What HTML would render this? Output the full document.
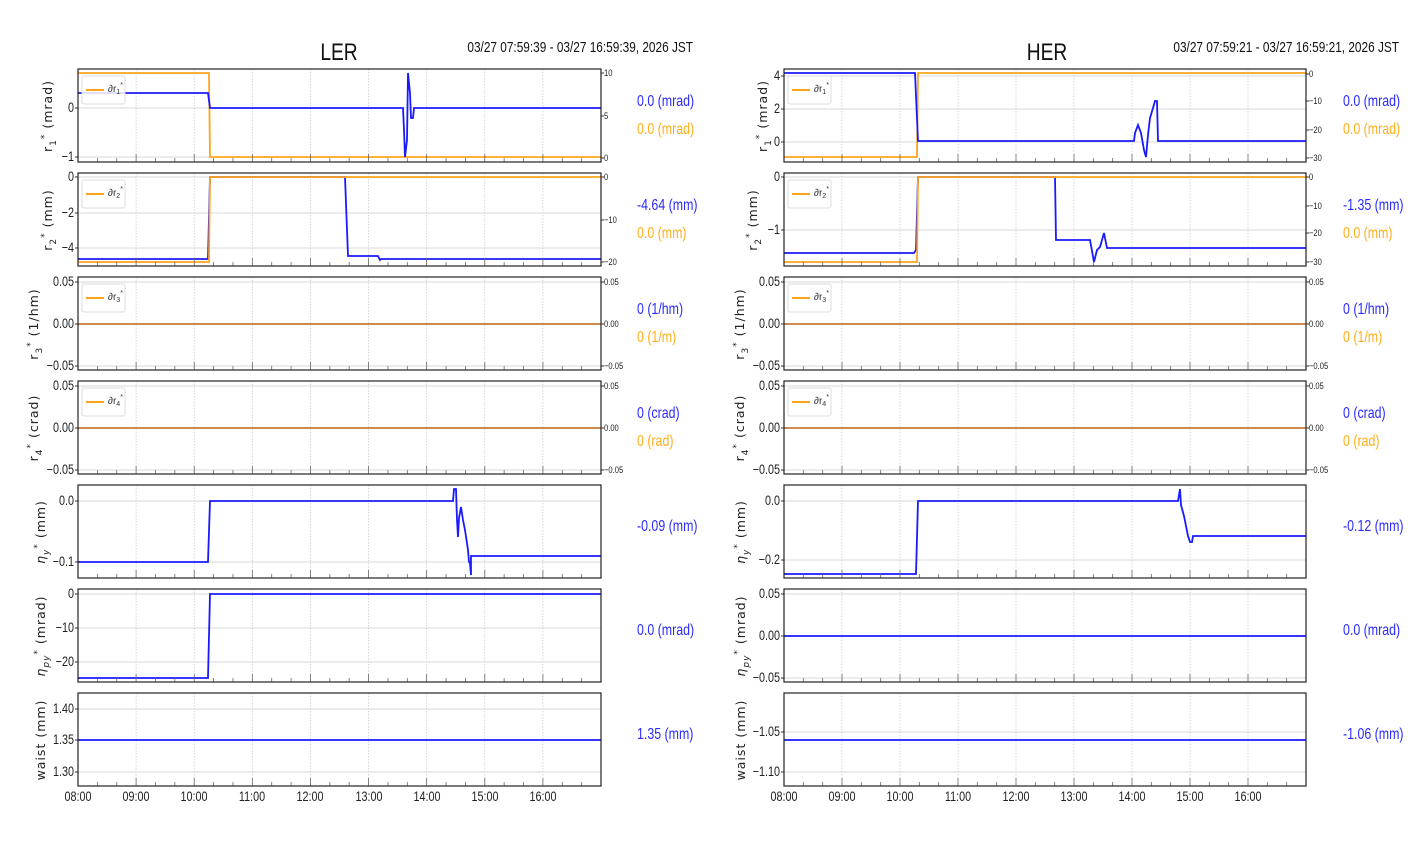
<!DOCTYPE html>
<html><head><meta charset="utf-8"><style>
body{margin:0;background:#fff}
svg{display:block}
.n{font-family:"Liberation Sans Narrow","Liberation Sans",sans-serif}
.n text,text.n{transform-box:fill-box}
.tl{font-size:13.5px;fill:#222;text-anchor:end}
.tl text{transform:scaleX(.8);transform-origin:right center}
.tr{font-size:9.5px;fill:#222}
.tr text{transform:scaleX(.8);transform-origin:left center}
.xl{font-size:13.5px;fill:#222;text-anchor:middle}
.xl text{transform:scaleX(.8);transform-origin:center}
.yl{font-family:"DejaVu Sans","Liberation Sans",sans-serif;font-size:12.5px;fill:#222;text-anchor:middle;letter-spacing:1px}
.vb{font-size:15.5px;fill:#2a2aff}
.vo{font-size:15.5px;fill:#ffae1a}
.vb,.vo{transform:scaleX(.8);transform-origin:left center}
.hd{transform:scaleX(.8);transform-origin:right center}
.tt{transform:scaleX(.8);transform-origin:center}
.lg{font-size:10px;fill:#333}
.b{fill:none;stroke:#1a1aff;stroke-width:1.8}
.o{fill:none;stroke:#ffa51a;stroke-width:1.8}
</style></head><body>
<svg id="s" width="1412" height="864" xmlns="http://www.w3.org/2000/svg">
<g id="grid"></g>
<!-- LEFT DATA -->
<polyline class="o" points="78,73 209,73 210,157 601,157"/>
<polyline class="b" points="78,93 208,93 210,108 403,108 404,130 405,157 407,140 408,73 410,93 411,118 413,118 414,108 601,108"/>
<polyline class="b" points="78,259 208,259 210,177 345,177 348,256 378,256 380,260 381,259 601,259"/>
<polyline class="o" points="78,262 209,262 210,177 601,177"/>
<line x1="78" y1="324" x2="601" y2="324" stroke="#c87a3a" stroke-width="1.8"/>
<line x1="78" y1="428" x2="601" y2="428" stroke="#c87a3a" stroke-width="1.8"/>
<polyline class="b" points="78,562 208,562 210,501 453,501 454,489 456,489 457,520 458,537 459,518 461,507 463,520 465,530 468,550 469,562 470,563 471,575 471,556 601,556"/>
<polyline class="b" points="78,678 208,678 210,594 601,594"/>
<line class="b" x1="78" y1="740" x2="601" y2="740"/>
<!-- RIGHT DATA -->
<polyline class="o" points="784,157 917,157 918,73 1306,73"/>
<polyline class="b" points="784,73 915,73 918,141 1134,141 1135,133 1138,125 1141,133 1144,150 1146,157 1148,135 1150,118 1153,108 1155,101 1157,101 1158,141 1306,141"/>
<polyline class="b" points="784,253 914,253 916,250 918,177 1055,177 1056,240 1090,240 1094,262 1097,250 1100,247 1104,233 1107,248 1306,248"/>
<polyline class="o" points="784,262 917,262 918,177 1306,177"/>
<line x1="784" y1="324" x2="1306" y2="324" stroke="#c87a3a" stroke-width="1.8"/>
<line x1="784" y1="428" x2="1306" y2="428" stroke="#c87a3a" stroke-width="1.8"/>
<polyline class="b" points="784,574 916,574 918,501 1178,501 1180,489 1181,505 1184,516 1186,526 1188,536 1190,542 1192,542 1193,536 1306,536"/>
<line class="b" x1="784" y1="636" x2="1306" y2="636"/>
<line class="b" x1="784" y1="740" x2="1306" y2="740"/>
<g id="frames"></g>
<!-- titles -->
<text class="n tt" x="339" y="60" font-size="24" text-anchor="middle" fill="#111">LER</text>
<text class="n hd" x="693" y="52" font-size="14.8" text-anchor="end" fill="#111">03/27 07:59:39 - 03/27 16:59:39, 2026 JST</text>
<text class="n tt" x="1047" y="60" font-size="24" text-anchor="middle" fill="#111">HER</text>
<text class="n hd" x="1399" y="52" font-size="14.8" text-anchor="end" fill="#111">03/27 07:59:21 - 03/27 16:59:21, 2026 JST</text>
<!-- left ticks -->
<g class="n tl">
<text x="74" y="112">0</text><text x="74" y="161">−1</text>
<text x="74" y="181">0</text><text x="74" y="217">−2</text><text x="74" y="252">−4</text>
<text x="74" y="286">0.05</text><text x="74" y="328">0.00</text><text x="74" y="370">−0.05</text>
<text x="74" y="390">0.05</text><text x="74" y="432">0.00</text><text x="74" y="474">−0.05</text>
<text x="74" y="505">0.0</text><text x="74" y="566">−0.1</text>
<text x="74" y="598">0</text><text x="74" y="632">−10</text><text x="74" y="666">−20</text>
<text x="74" y="713">1.40</text><text x="74" y="744">1.35</text><text x="74" y="776">1.30</text>
<text x="780" y="80">4</text><text x="780" y="113">2</text><text x="780" y="146">0</text>
<text x="780" y="181">0</text><text x="780" y="234">−1</text>
<text x="780" y="286">0.05</text><text x="780" y="328">0.00</text><text x="780" y="370">−0.05</text>
<text x="780" y="390">0.05</text><text x="780" y="432">0.00</text><text x="780" y="474">−0.05</text>
<text x="780" y="505">0.0</text><text x="780" y="564">−0.2</text>
<text x="780" y="598">0.05</text><text x="780" y="640">0.00</text><text x="780" y="682">−0.05</text>
<text x="780" y="736">−1.05</text><text x="780" y="776">−1.10</text>
</g>
<g class="n tr">
<text x="604" y="76">10</text><text x="604" y="119">5</text><text x="604" y="161">0</text>
<text x="604" y="180">0</text><text x="604" y="223">−10</text><text x="604" y="265">−20</text>
<text x="604" y="285">0.05</text><text x="604" y="327">0.00</text><text x="604" y="369">−0.05</text>
<text x="604" y="389">0.05</text><text x="604" y="431">0.00</text><text x="604" y="473">−0.05</text>
<text x="1309" y="77">0</text><text x="1309" y="104">−10</text><text x="1309" y="133">−20</text><text x="1309" y="161">−30</text>
<text x="1309" y="180">0</text><text x="1309" y="209">−10</text><text x="1309" y="236">−20</text><text x="1309" y="265">−30</text>
<text x="1309" y="285">0.05</text><text x="1309" y="327">0.00</text><text x="1309" y="369">−0.05</text>
<text x="1309" y="389">0.05</text><text x="1309" y="431">0.00</text><text x="1309" y="473">−0.05</text>
</g>
<g class="n xl">
<text x="78" y="801">08:00</text><text x="136" y="801">09:00</text><text x="194" y="801">10:00</text><text x="252" y="801">11:00</text><text x="310" y="801">12:00</text><text x="369" y="801">13:00</text><text x="427" y="801">14:00</text><text x="485" y="801">15:00</text><text x="543" y="801">16:00</text>
<text x="784" y="801">08:00</text><text x="842" y="801">09:00</text><text x="900" y="801">10:00</text><text x="958" y="801">11:00</text><text x="1016" y="801">12:00</text><text x="1074" y="801">13:00</text><text x="1132" y="801">14:00</text><text x="1190" y="801">15:00</text><text x="1248" y="801">16:00</text>
</g>
<!-- y labels -->
<g class="yl">
<text transform="translate(52,116) rotate(-90)">r<tspan font-size="9" dy="4">1</tspan><tspan font-size="9" dy="-9">*</tspan><tspan dy="5"> (mrad)</tspan></text>
<text transform="translate(52,220) rotate(-90)">r<tspan font-size="9" dy="4">2</tspan><tspan font-size="9" dy="-9">*</tspan><tspan dy="5"> (mm)</tspan></text>
<text transform="translate(38,324) rotate(-90)">r<tspan font-size="9" dy="4">3</tspan><tspan font-size="9" dy="-9">*</tspan><tspan dy="5"> (1/hm)</tspan></text>
<text transform="translate(38,428) rotate(-90)">r<tspan font-size="9" dy="4">4</tspan><tspan font-size="9" dy="-9">*</tspan><tspan dy="5"> (crad)</tspan></text>
<text transform="translate(45,532) rotate(-90)"><tspan font-style="italic">η</tspan><tspan font-size="9" dy="4" font-style="italic">y</tspan><tspan font-size="9" dy="-9">*</tspan><tspan dy="5"> (mm)</tspan></text>
<text transform="translate(45,636) rotate(-90)"><tspan font-style="italic">η</tspan><tspan font-size="9" dy="4" font-style="italic">py</tspan><tspan font-size="9" dy="-9">*</tspan><tspan dy="5"> (mrad)</tspan></text>
<text transform="translate(45,740) rotate(-90)">waist (mm)</text>
<text transform="translate(767,116) rotate(-90)">r<tspan font-size="9" dy="4">1</tspan><tspan font-size="9" dy="-9">*</tspan><tspan dy="5"> (mrad)</tspan></text>
<text transform="translate(757,220) rotate(-90)">r<tspan font-size="9" dy="4">2</tspan><tspan font-size="9" dy="-9">*</tspan><tspan dy="5"> (mm)</tspan></text>
<text transform="translate(744,324) rotate(-90)">r<tspan font-size="9" dy="4">3</tspan><tspan font-size="9" dy="-9">*</tspan><tspan dy="5"> (1/hm)</tspan></text>
<text transform="translate(744,428) rotate(-90)">r<tspan font-size="9" dy="4">4</tspan><tspan font-size="9" dy="-9">*</tspan><tspan dy="5"> (crad)</tspan></text>
<text transform="translate(745,532) rotate(-90)"><tspan font-style="italic">η</tspan><tspan font-size="9" dy="4" font-style="italic">y</tspan><tspan font-size="9" dy="-9">*</tspan><tspan dy="5"> (mm)</tspan></text>
<text transform="translate(745,636) rotate(-90)"><tspan font-style="italic">η</tspan><tspan font-size="9" dy="4" font-style="italic">py</tspan><tspan font-size="9" dy="-9">*</tspan><tspan dy="5"> (mrad)</tspan></text>
<text transform="translate(745,740) rotate(-90)">waist (mm)</text>
</g>
<!-- values -->
<g class="n">
<text class="vb" x="637" y="106">0.0 (mrad)</text><text class="vo" x="637" y="134">0.0 (mrad)</text>
<text class="vb" x="637" y="210">-4.64 (mm)</text><text class="vo" x="637" y="238">0.0 (mm)</text>
<text class="vb" x="637" y="314">0 (1/hm)</text><text class="vo" x="637" y="342">0 (1/m)</text>
<text class="vb" x="637" y="418">0 (crad)</text><text class="vo" x="637" y="446">0 (rad)</text>
<text class="vb" x="637" y="531">-0.09 (mm)</text>
<text class="vb" x="637" y="635">0.0 (mrad)</text>
<text class="vb" x="637" y="739">1.35 (mm)</text>
<text class="vb" x="1343" y="106">0.0 (mrad)</text><text class="vo" x="1343" y="134">0.0 (mrad)</text>
<text class="vb" x="1343" y="210">-1.35 (mm)</text><text class="vo" x="1343" y="238">0.0 (mm)</text>
<text class="vb" x="1343" y="314">0 (1/hm)</text><text class="vo" x="1343" y="342">0 (1/m)</text>
<text class="vb" x="1343" y="418">0 (crad)</text><text class="vo" x="1343" y="446">0 (rad)</text>
<text class="vb" x="1343" y="531">-0.12 (mm)</text>
<text class="vb" x="1343" y="635">0.0 (mrad)</text>
<text class="vb" x="1343" y="739">-1.06 (mm)</text>
</g>
<!-- legends -->
<g class="n lg">
<g transform="translate(0,0)"><rect x="82" y="76" width="43" height="28" rx="2" fill="#fff" fill-opacity=".85" stroke="#ddd"/><line x1="86" y1="90" x2="104" y2="90" stroke="#ffa51a" stroke-width="2"/><text x="108" y="92">∂r<tspan font-size="7" dy="2">1</tspan><tspan font-size="7" dy="-7">*</tspan></text></g>
<g transform="translate(0,104)"><rect x="82" y="76" width="43" height="28" rx="2" fill="#fff" fill-opacity=".85" stroke="#ddd"/><line x1="86" y1="90" x2="104" y2="90" stroke="#ffa51a" stroke-width="2"/><text x="108" y="92">∂r<tspan font-size="7" dy="2">2</tspan><tspan font-size="7" dy="-7">*</tspan></text></g>
<g transform="translate(0,208)"><rect x="82" y="76" width="43" height="28" rx="2" fill="#fff" fill-opacity=".85" stroke="#ddd"/><line x1="86" y1="90" x2="104" y2="90" stroke="#ffa51a" stroke-width="2"/><text x="108" y="92">∂r<tspan font-size="7" dy="2">3</tspan><tspan font-size="7" dy="-7">*</tspan></text></g>
<g transform="translate(0,312)"><rect x="82" y="76" width="43" height="28" rx="2" fill="#fff" fill-opacity=".85" stroke="#ddd"/><line x1="86" y1="90" x2="104" y2="90" stroke="#ffa51a" stroke-width="2"/><text x="108" y="92">∂r<tspan font-size="7" dy="2">4</tspan><tspan font-size="7" dy="-7">*</tspan></text></g>
<g transform="translate(706,0)"><rect x="82" y="76" width="43" height="28" rx="2" fill="#fff" fill-opacity=".85" stroke="#ddd"/><line x1="86" y1="90" x2="104" y2="90" stroke="#ffa51a" stroke-width="2"/><text x="108" y="92">∂r<tspan font-size="7" dy="2">1</tspan><tspan font-size="7" dy="-7">*</tspan></text></g>
<g transform="translate(706,104)"><rect x="82" y="76" width="43" height="28" rx="2" fill="#fff" fill-opacity=".85" stroke="#ddd"/><line x1="86" y1="90" x2="104" y2="90" stroke="#ffa51a" stroke-width="2"/><text x="108" y="92">∂r<tspan font-size="7" dy="2">2</tspan><tspan font-size="7" dy="-7">*</tspan></text></g>
<g transform="translate(706,208)"><rect x="82" y="76" width="43" height="28" rx="2" fill="#fff" fill-opacity=".85" stroke="#ddd"/><line x1="86" y1="90" x2="104" y2="90" stroke="#ffa51a" stroke-width="2"/><text x="108" y="92">∂r<tspan font-size="7" dy="2">3</tspan><tspan font-size="7" dy="-7">*</tspan></text></g>
<g transform="translate(706,312)"><rect x="82" y="76" width="43" height="28" rx="2" fill="#fff" fill-opacity=".85" stroke="#ddd"/><line x1="86" y1="90" x2="104" y2="90" stroke="#ffa51a" stroke-width="2"/><text x="108" y="92">∂r<tspan font-size="7" dy="2">4</tspan><tspan font-size="7" dy="-7">*</tspan></text></g>
</g>
</svg>
<script>
(function(){
var NS="http://www.w3.org/2000/svg",g=document.getElementById('grid'),f=document.getElementById('frames');
function el(p,t,a){var e=document.createElementNS(NS,t);for(var k in a)e.setAttribute(k,a[k]);p.appendChild(e);}
var tops=[69,173,277,381,485,589,693],H=93;
var yg={L:[[108,157],[177,213,248],[282,324,366],[386,428,470],[501,562],[594,628,662],[709,740,772]],
R:[[76,109,142],[177,230],[282,324,366],[386,428,470],[501,560],[594,636,678],[732,772]]};
var rt={L:[[73,116,158],[177,220,262],[282,324,366],[386,428,470]],R:[[74,101,130,158],[177,206,233,262],[282,324,366],[386,428,470]]};
[['L',78,601],['R',784,1306]].forEach(function(s){
 var k=s[0],x0=s[1],x1=s[2],hp=(x1-x0)/9;
 tops.forEach(function(t,i){
  var b=t+H;
  for(var h=1;h<9;h++){var x=x0+h*hp;el(g,'line',{x1:x,y1:t,x2:x,y2:b,stroke:'#ccc','stroke-dasharray':'1.5,1.5','stroke-width':0.8});}
  yg[k][i].forEach(function(y){el(g,'line',{x1:x0,y1:y,x2:x1,y2:y,stroke:'#ccc','stroke-width':0.8});el(f,'line',{x1:x0-3,y1:y,x2:x0,y2:y,stroke:'#333'});});
  for(var m=1;m<27;m++){var x=x0+m*hp/3,L=(m%3==0)?8:4;el(f,'line',{x1:x,y1:b,x2:x,y2:b-L,stroke:'#666','stroke-width':0.8});}
  el(f,'rect',{x:x0,y:t,width:x1-x0,height:H,fill:'none',stroke:'#222','stroke-width':1.2});
  if(rt[k][i])rt[k][i].forEach(function(y){el(f,'line',{x1:x1,y1:y,x2:x1+3,y2:y,stroke:'#333'});});
 });
});
})();
</script>
</body></html>
